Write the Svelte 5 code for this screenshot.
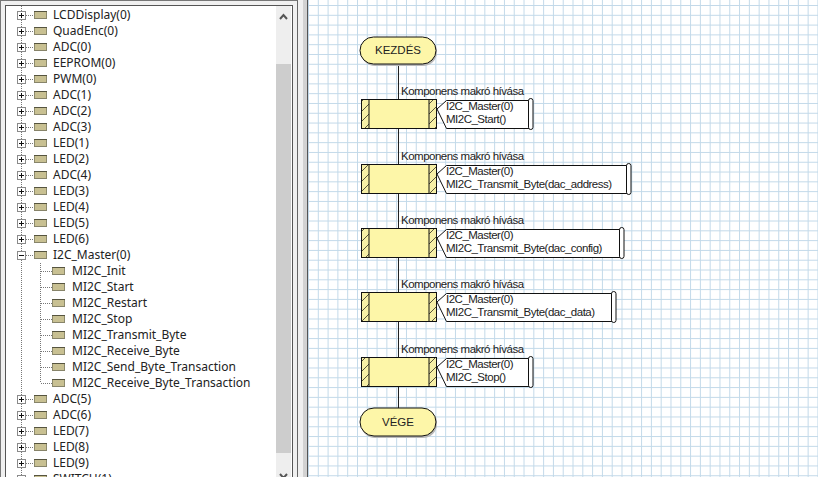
<script>
  const before = ['LCDDisplay(0)','QuadEnc(0)','ADC(0)','EEPROM(0)','PWM(0)','ADC(1)','ADC(2)','ADC(3)','LED(1)','LED(2)','ADC(4)','LED(3)','LED(4)','LED(5)','LED(6)'];
  const children = ['MI2C_Init','MI2C_Start','MI2C_Restart','MI2C_Stop','MI2C_Transmit_Byte','MI2C_Receive_Byte','MI2C_Send_Byte_Transaction','MI2C_Receive_Byte_Transaction'];
  const after = ['ADC(5)','ADC(6)','LED(7)','LED(8)','LED(9)','SWITCH(1)'];
  const macros = [
    { y: 99, right: 531, call: 'MI2C_Start()' },
    { y: 164, right: 629, call: 'MI2C_Transmit_Byte(dac_address)' },
    { y: 228, right: 622, call: 'MI2C_Transmit_Byte(dac_config)' },
    { y: 292, right: 614, call: 'MI2C_Transmit_Byte(dac_data)' },
    { y: 357, right: 531, call: 'MI2C_Stop()' }
  ];
  const ox = 308, oy = 0;
</script>

{#snippet compIcon()}
  <svg class="comp" width="13" height="8" viewBox="0 0 13 8">
    <rect x="0" y="0" width="13" height="8" fill="#c8c092" />
    <path d="M0 .5h13" stroke="#56543f" />
    <path d="M.5 1v6M12.5 1v6" stroke="#8d8a6c" />
    <path d="M0 7.5h13" stroke="#87846a" />
  </svg>
{/snippet}

{#snippet parent(name, open)}
  <div class="row">
    <svg class="expander" width="9" height="9" viewBox="0 0 9 9">
      <rect x="0.5" y="0.5" width="8" height="8" fill="#fff" stroke="#8a8a8a" />
      <path d={open ? 'M2 4.5h5' : 'M2 4.5h5M4.5 2v5'} stroke="#111" />
    </svg>
    <span class="hdots"></span>
    {@render compIcon()}
    <span class="label">{name}</span>
  </div>
{/snippet}

<div class="window">
  <aside class="frame">
    <div class="inner">
      <div class="tree">
        {#each before as n}{@render parent(n, false)}{/each}
        {@render parent('I2C_Master(0)', true)}
        <div class="children">
          {#each children as c}
            <div class="row child">
              <span class="hdots long"></span>
              {@render compIcon()}
              <span class="label">{c}</span>
            </div>
          {/each}
        </div>
        {#each after as n}{@render parent(n, false)}{/each}
      </div>
      <div class="scrollbar">
        <svg class="arrow" width="15" height="12" viewBox="0 0 15 12"><path d="M4 9l3.5-4 3.5 4" fill="none" stroke="#555" stroke-width="2" /></svg>
        <div class="thumb"></div>
        <svg class="arrow" width="15" height="12" viewBox="0 0 15 12"><path d="M4 6l3.5 4 3.5-4" fill="none" stroke="#555" stroke-width="2" /></svg>
      </div>
    </div>
  </aside>
  <div class="splitter"></div>
  <main class="canvas">
    <svg class="chart" width="510" height="477" viewBox="{ox} {oy} 510 477">
      <defs>
        <pattern id="hatch" width="10" height="10" patternUnits="userSpaceOnUse" patternTransform="translate(1 2)">
          <rect width="10" height="10" fill="#f6efa6" />
          <path d="M-2 12L12 -2M-2 2L2 -2M8 12L12 8" stroke="#55533c" stroke-width="1" />
        </pattern>
      </defs>
      <path class="wire" d="M398.5 63V99M398.5 128V164M398.5 193V228M398.5 257V292M398.5 321V357M398.5 386V408" />

      <rect class="shadow" x="361" y="38" width="76" height="28" rx="14" />
      <rect class="block" x="360" y="37" width="76" height="27" rx="13.5" />
      <text class="t term" x="398" y="54" text-anchor="middle">KEZDÉS</text>

      {#each macros as m}
        <text class="t" x="401" y={m.y - 4}>Komponens makró hívása</text>
        <rect class="block" x="361.5" y={m.y + 0.5} width="75" height="29" />
        <rect class="hatch" x="361.5" y={m.y + 0.5} width="7.5" height="29" />
        <rect class="hatch" x="429" y={m.y + 0.5} width="7.5" height="29" />
        <path class="note" d="M437 {m.y + 10}L446.5 {m.y + 1.5}H{m.right - 2}V{m.y + 29.5}H446.5L437 {m.y + 10}Z" />
        <rect class="roll" x={m.right - 2.5} y={m.y - 0.5} width="4.5" height="31" rx="2.2" />
        <text class="t" x="446" y={m.y + 11}>I2C_Master(0)</text>
        <text class="t" x="446" y={m.y + 24}>{m.call}</text>
      {/each}

      <rect class="shadow" x="361" y="409" width="76" height="29" rx="14" />
      <rect class="block" x="360" y="408" width="76" height="28" rx="14" />
      <text class="t term" x="398" y="426" text-anchor="middle">VÉGE</text>
    </svg>
  </main>
</div>

<style>
  :global(body) { margin: 0; background: #f0f0f0; }
  .window {
    display: flex;
    width: 818px;
    height: 477px;
    overflow: hidden;
    background: #f0f0f0;
  }
  .frame {
    box-sizing: border-box;
    width: 298px;
    height: 477px;
    padding: 0 4px 0 4px;
    border-left: 1px solid #777;
    border-right: 1px solid #666;
    border-top: 1px solid #777;
    flex: none;
  }
  .inner {
    display: flex;
    box-sizing: border-box;
    height: 480px;
    margin-top: 4px;
    border: 1px solid #555;
    border-bottom: none;
    background: #fff;
  }
  .tree {
    flex: 1;
    min-width: 0;
    padding: 1px 0 0 11px;
    font-family: "Noto Sans", sans-serif;
    background-image: repeating-linear-gradient(to bottom, #777 0 1px, transparent 1px 2px);
    background-size: 1px 100%;
    background-position: 15px 0;
    background-repeat: no-repeat;
  }
  .children {
    background-image: repeating-linear-gradient(to bottom, #777 0 1px, transparent 1px 2px);
    background-size: 1px 120px;
    background-position: 23px 0;
    background-repeat: no-repeat;
  }
  .row {
    display: flex;
    align-items: center;
    height: 16px;
    font-size: 12px;
    color: #222;
  }
  .row.child { padding-left: 24px; }
  .row.child .label { margin-left: 7px; }
  .expander { flex: none; background: #fff; }
  .comp { flex: none; }
  .hdots {
    width: 8px;
    height: 1px;
    flex: none;
    background-image: repeating-linear-gradient(to right, #777 0 1px, transparent 1px 2px);
  }
  .hdots.long { width: 11px; }
  .label { margin: 0 0 2px 6px; white-space: nowrap; }
  .scrollbar {
    flex: none;
    width: 15px;
    margin-right: 1px;
    display: flex;
    flex-direction: column;
    background: #eee;
  }
  .arrow { flex: none; display: block; }
  .scrollbar .arrow:first-child { margin-top: 4px; margin-bottom: 42px; }
  .thumb { height: 389px; background: #cdcdcd; flex: none; margin-bottom: 15px; }
  .splitter {
    width: 9px;
    flex: none;
    background: linear-gradient(to right, #f0f0f0 0 5px, #d2d2d2 5px);
  }
  .canvas {
    flex: 1;
    border-left: 1px solid #555;
    background-color: #fff;
    background-image:
      linear-gradient(to right, #c2d9e9 1px, transparent 1px),
      linear-gradient(to bottom, #c2d9e9 1px, transparent 1px);
    background-size: 9.8px 9.8px;
    background-position: 0 5px;
    position: relative;
    min-width: 0;
  }
  .chart { position: absolute; left: 0; top: 0; display: block; }
  .wire { stroke: #222; fill: none; }
  .block { fill: #fdf6a8; stroke: #111; }
  .shadow { fill: #b9b9b9; stroke: none; }
  .hatch { fill: url(#hatch); stroke: #111; }
  .note { fill: #fff; stroke: #111; }
  .roll { fill: #fff; stroke: #111; }
  .t { font-size: 11.5px; letter-spacing: -0.5px; fill: #222; font-family: "Liberation Sans", sans-serif; }
  .t.term { letter-spacing: 0; }
</style>
